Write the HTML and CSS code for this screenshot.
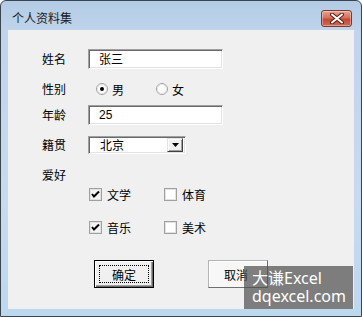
FILE: index.html
```html
<!DOCTYPE html>
<html lang="zh">
<head>
<meta charset="utf-8">
<link rel="stylesheet" href="styles.css">
</head>
<body>
<div class="window">
  <div class="titlebar">
    <span class="title">个人资料集</span>
    <div class="close">
      <svg width="16" height="11" viewBox="0 0 16 11">
        <path d="M3 1.5 L13 9.5 M13 1.5 L3 9.5" stroke="#5a2018" stroke-width="4" stroke-linecap="round"/>
        <path d="M3 1.5 L13 9.5 M13 1.5 L3 9.5" stroke="#ffffff" stroke-width="2" stroke-linecap="round"/>
      </svg>
    </div>
  </div>
  <div class="client">
    <div class="row r1">
      <span class="label">姓名</span>
      <div class="field text-field">张三</div>
    </div>
    <div class="row r2">
      <span class="label">性别</span>
      <div class="radios">
        <span class="radio">
          <svg width="12" height="12" viewBox="0 0 12 12">
            <circle cx="6" cy="6" r="5.5" fill="#fff" stroke="#a0a0a0"/>
            <circle cx="6" cy="6" r="4.5" fill="none" stroke="#e2e2e2"/>
            <circle cx="6" cy="6" r="2" fill="#000"/>
          </svg>
          <span>男</span>
        </span>
        <span class="radio">
          <svg width="12" height="12" viewBox="0 0 12 12">
            <circle cx="6" cy="6" r="5.5" fill="#fff" stroke="#a0a0a0"/>
            <circle cx="6" cy="6" r="4.5" fill="none" stroke="#e2e2e2"/>
          </svg>
          <span>女</span>
        </span>
      </div>
    </div>
    <div class="row r3">
      <span class="label">年龄</span>
      <div class="field text-field num">25</div>
    </div>
    <div class="row r4">
      <span class="label">籍贯</span>
      <div class="field combo">
        <span class="combo-text">北京</span>
        <span class="drop">
          <svg width="7" height="4" viewBox="0 0 7 4"><path d="M0 0 H7 L3.5 4 Z" fill="#000"/></svg>
        </span>
      </div>
    </div>
    <div class="row r5">
      <span class="label">爱好</span>
    </div>
    <div class="checks r6">
      <span class="check">
        <svg width="13" height="13" viewBox="0 0 13 13">
          <rect x="0.5" y="0.5" width="12" height="12" fill="#fff" stroke="#a0a0a0"/>
          <rect x="1.5" y="1.5" width="10" height="10" fill="#f4f4f4" stroke="#e2e2e2"/>
          <path d="M3 6 L5 8.5 L10 3.5" fill="none" stroke="#000" stroke-width="2"/>
        </svg>
        <span>文学</span>
      </span>
      <span class="check">
        <svg width="13" height="13" viewBox="0 0 13 13">
          <rect x="0.5" y="0.5" width="12" height="12" fill="#fff" stroke="#a0a0a0"/>
          <rect x="1.5" y="1.5" width="10" height="10" fill="#fff" stroke="#e2e2e2"/>
        </svg>
        <span>体育</span>
      </span>
    </div>
    <div class="checks r7">
      <span class="check">
        <svg width="13" height="13" viewBox="0 0 13 13">
          <rect x="0.5" y="0.5" width="12" height="12" fill="#fff" stroke="#a0a0a0"/>
          <rect x="1.5" y="1.5" width="10" height="10" fill="#f4f4f4" stroke="#e2e2e2"/>
          <path d="M3 6 L5 8.5 L10 3.5" fill="none" stroke="#000" stroke-width="2"/>
        </svg>
        <span>音乐</span>
      </span>
      <span class="check">
        <svg width="13" height="13" viewBox="0 0 13 13">
          <rect x="0.5" y="0.5" width="12" height="12" fill="#fff" stroke="#a0a0a0"/>
          <rect x="1.5" y="1.5" width="10" height="10" fill="#fff" stroke="#e2e2e2"/>
        </svg>
        <span>美术</span>
      </span>
    </div>
    <div class="buttons">
      <div class="btn btn-default"><span class="focus">确定</span></div>
      <div class="btn btn-cancel">取消</div>
    </div>
  </div>
  <div class="watermark">
    <div>大谦Excel</div>
    <div>dqexcel.com</div>
  </div>
</div>
</body>
</html>
```
FILE: styles.css
```css
* { box-sizing: border-box; }
html, body { margin: 0; padding: 0; }
body {
  font-family: "Noto Sans CJK SC", "Liberation Sans", sans-serif;
  font-size: 12px;
  color: #000;
  background: #fff;
}
.window {
  position: relative;
  width: 362px;
  height: 317px;
  border: 1px solid #3a4550;
  border-radius: 6px 6px 0 0;
  background: linear-gradient(to bottom, #b3cbe5 0px, #c0d5ec 30px, #c6dbef 200px, #bcd8ef 100%);
  padding: 0 7px 7px 7px;
  display: flex;
  flex-direction: column;
  overflow: hidden;
}
.titlebar {
  height: 29px;
  display: flex;
  align-items: flex-start;
  flex: none;
}
.title {
  margin-top: 9px;
  margin-left: 4px;
  font-size: 12px;
  line-height: 16px;
  color: #1a1a1a;
}
.close {
  margin-left: auto;
  margin-right: 2px;
  margin-top: 9px;
  width: 31px;
  height: 17px;
  border: 1px solid #7b3a30;
  border-radius: 3px;
  background: linear-gradient(to bottom, #e8a293 0%, #d6705d 45%, #c24a35 55%, #d06a52 100%);
  box-shadow: inset 0 0 0 1px rgba(255,255,255,0.35);
  display: flex;
  align-items: center;
  justify-content: center;
}
.client {
  flex: 1;
  background: #f0f0f0;
  padding: 19px 0 0 34px;
  display: flex;
  flex-direction: column;
}
.row {
  display: flex;
  align-items: center;
  height: 20px;
}
.label {
  width: 46px;
  flex: none;
  line-height: 16px;
}
.r2 { margin-top: 10px; }
.r3 { margin-top: 6px; }
.r4 { margin-top: 11px; height: 18px; }
.r5 { margin-top: 11px; }
.field {
  background: #fff;
  border-top: 1px solid #a0a0a0;
  border-left: 1px solid #a0a0a0;
  border-right: 1px solid #fff;
  border-bottom: 1px solid #fff;
  box-shadow: inset 1px 1px 0 #696969, inset -1px -1px 0 #e3e3e3;
}
.text-field {
  width: 135px;
  height: 20px;
  padding-left: 10px;
  line-height: 18px;
}
.num { font-family: "Liberation Sans", sans-serif; font-size: 12px; }
.combo {
  width: 98px;
  height: 18px;
  display: flex;
  align-items: center;
  padding: 2px 2px 2px 11px;
}
.combo-text { flex: 1; line-height: 14px; }
.drop {
  width: 16px;
  height: 14px;
  background: #f0f0f0;
  border-top: 1px solid #e3e3e3;
  border-left: 1px solid #e3e3e3;
  border-right: 1px solid #404040;
  border-bottom: 1px solid #404040;
  box-shadow: inset 1px 1px 0 #fff, inset -1px -1px 0 #a0a0a0;
  display: flex;
  align-items: center;
  justify-content: center;
}
.radios {
  display: flex;
  margin-left: 8px;
}
.radio {
  display: flex;
  align-items: center;
  width: 60px;
}
.radio svg { margin-right: 4px; flex: none; }
.checks {
  display: flex;
  height: 14px;
  align-items: center;
  margin-left: 47px;
}
.r6 { margin-top: 2px; }
.r7 { margin-top: 19px; }
.check {
  display: flex;
  align-items: center;
  width: 75px;
}
.check svg { margin-right: 5px; flex: none; }
.buttons {
  display: flex;
  margin-top: 26px;
  margin-left: 52px;
}
.btn {
  width: 60px;
  height: 28px;
  display: flex;
  align-items: center;
  justify-content: center;
  background: #f0f0f0;
}
.btn-default {
  border: 1px solid #000;
  box-shadow: inset 1px 1px 0 #fff, inset -1px -1px 0 #696969, inset -2px -2px 0 #a0a0a0;
  padding: 4px;
}
.focus {
  width: 100%;
  height: 100%;
  border: 1px dotted #000;
  display: flex;
  align-items: center;
  justify-content: center;
}
.btn-cancel {
  margin-left: 54px;
  background: #f7f7f7;
  border-top: 1px solid #b4b4b4;
  border-left: 1px solid #b4b4b4;
  border-right: 1px solid #6e6e6e;
  border-bottom: 1px solid #6e6e6e;
  box-shadow: inset 1px 1px 0 #fff;
  padding-right: 4px;
}
.watermark {
  position: absolute;
  left: 243px;
  top: 265px;
  width: 109px;
  height: 43px;
  background: rgba(80, 80, 80, 0.72);
  color: #fff;
  font-family: "Noto Sans", "Noto Sans CJK SC", sans-serif;
  font-size: 16px;
  line-height: 18px;
  padding: 3px 0 0 8px;
}
```
